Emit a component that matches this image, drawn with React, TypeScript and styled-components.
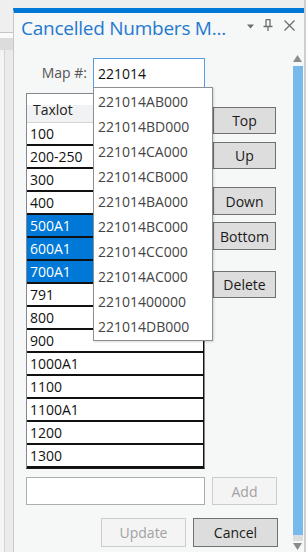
import React from 'react'
import styled, { createGlobalStyle } from 'styled-components'

const GlobalStyle = createGlobalStyle`
  html, body {
    margin: 0;
    padding: 0;
    background: #eeeeee;
  }
  body {
    width: 306px;
    height: 552px;
    overflow: hidden;
    font-family: 'Open Sans', 'Noto Sans', sans-serif;
  }
`

const taxlots = [
  '100', '200-250', '300', '400', '500A1', '600A1', '700A1', '791',
  '800', '900', '1000A1', '1100', '1100A1', '1200', '1300'
]
const selected = ['500A1', '600A1', '700A1']

const suggestions = [
  '221014AB000', '221014BD000', '221014CA000', '221014CB000', '221014BA000',
  '221014BC000', '221014CC000', '221014AC000', '22101400000', '221014DB000'
]

const Root = styled.div`
  display: flex;
  width: 306px;
  height: 552px;
`

const LeftStrip = styled.div`
  width: 13px;
  display: flex;
  flex-direction: column;
`

const StripTop = styled.div`
  height: 32px;
  background: #efefef;
  border-bottom: 1px solid #c6c6c6;
`

const StripWhite = styled.div`
  height: 5px;
  background: #fafafa;
`

const StripTab = styled.div`
  height: 12px;
  background: #dcdcdc;
`

const StripBody = styled.div`
  flex: 1;
  display: flex;
  background: #ebebeb;
`

const StripEdge = styled.div`
  width: 4px;
  background: #f4f4f4;
  border-right: 1px solid #d3d3d3;
`

const Panel = styled.div`
  flex: 1;
  margin-top: 8px;
  display: flex;
  flex-direction: column;
  background: #f6f7f7;
  border-left: 1px solid #c8c8c8;
  border-top: 5px solid #0078d7;
  padding-right: 1px;
`

const RightStrip = styled.div`
  width: 2px;
  background: #cfcfcf;
`

const TitleBar = styled.div`
  height: 37px;
  box-sizing: border-box;
  display: flex;
  align-items: flex-start;
  padding: 2px 8px 0 7px;
`

const Title = styled.div`
  flex: 1;
  font-size: 19px;
  line-height: 26px;
  color: #2479d0;
  white-space: nowrap;
  letter-spacing: -0.25px;
`

const TitleIcons = styled.div`
  display: flex;
  align-items: center;
  margin-top: 4px;
`

const IconSlot = styled.div<{ $gap: number }>`
  display: flex;
  margin-left: ${({ $gap }) => $gap}px;
`

const Body = styled.div`
  flex: 1;
  display: flex;
`

const Main = styled.div`
  flex: 1;
  padding: 8px 14px 0 12px;
  display: flex;
  flex-direction: column;
`

const MapRow = styled.div`
  display: flex;
  height: 30px;
`

const MapLabel = styled.div`
  width: 67px;
  padding-right: 6px;
  box-sizing: border-box;
  text-align: right;
  font-size: 14px;
  color: #555555;
  line-height: 30px;
`

const MapField = styled.div`
  position: relative;
`

const TextBox = styled.div<{ $focused?: boolean; $width: number }>`
  width: ${({ $width }) => $width}px;
  height: 100%;
  box-sizing: border-box;
  background: #ffffff;
  border: 1px solid ${({ $focused }) => ($focused ? '#569de5' : '#abadb3')};
  font-size: 14px;
  color: #111;
  padding-left: 4px;
  display: flex;
  align-items: center;
`

const Dropdown = styled.div`
  position: absolute;
  top: 29px;
  left: 0;
  width: 120px;
  box-sizing: border-box;
  background: #ffffff;
  border: 1px solid #8c8f94;
  box-shadow: 1px 1px 2px rgba(0, 0, 0, 0.15);
  padding: 1px 0;
  z-index: 2;
`

const DropItem = styled.div`
  height: 25px;
  line-height: 25px;
  padding-left: 4px;
  font-size: 14px;
  color: #444444;
`

const ListArea = styled.div`
  display: flex;
  margin-top: 5px;
`

const Table = styled.div`
  width: 179px;
  height: 376px;
  box-sizing: border-box;
  border: 1px solid #828790;
  border-bottom-color: #1a1a1a;
  background: #ffffff;
  overflow: hidden;
`

const Header = styled.div`
  height: 29px;
  box-sizing: border-box;
  background: linear-gradient(#ffffff 0 40%, #f1f2f3 40%);
  border-bottom: 1px solid #d5d5d5;
  padding: 6px 0 0 6px;
  font-size: 14px;
  color: #222;
`

const Row = styled.div<{ $selected: boolean }>`
  height: 23px;
  box-sizing: border-box;
  border-bottom: 2px solid #111;
  border-right: 1px solid #111;
  padding-left: 3px;
  font-size: 14px;
  line-height: 21px;
  background: ${({ $selected }) => ($selected ? '#0078d7' : '#ffffff')};
  color: ${({ $selected }) => ($selected ? '#ffffff' : '#111111')};
`

const ButtonColumn = styled.div`
  display: flex;
  flex-direction: column;
  margin-left: 8px;
  padding-top: 14px;
`

const Button = styled.div<{ $disabled?: boolean; $gap?: number; $width: number; $height?: number }>`
  width: ${({ $width }) => $width}px;
  height: ${({ $height }) => $height ?? 27}px;
  margin-top: ${({ $gap }) => $gap ?? 0}px;
  box-sizing: border-box;
  display: flex;
  align-items: center;
  justify-content: center;
  font-size: 14px;
  background: ${({ $disabled }) => ($disabled ? '#f4f4f4' : '#dddddd')};
  border: 1px solid ${({ $disabled }) => ($disabled ? '#cccccc' : '#707070')};
  color: ${({ $disabled }) => ($disabled ? '#a2a2a2' : '#1a1a1a')};
`

const AddRow = styled.div`
  display: flex;
  gap: 7px;
  height: 28px;
  margin-top: 8px;
`

const Footer = styled.div`
  display: flex;
  justify-content: flex-end;
  gap: 7px;
  margin-top: 13px;
`

const ScrollBar = styled.div`
  width: 11px;
  display: flex;
  flex-direction: column;
  align-items: center;
  padding-top: 5px;
`

const Thumb = styled.div`
  width: 10px;
  flex: 1;
  margin-top: 4px;
  background: #77b9eb;
  border-bottom: 6px solid #dcdcdc;
`

const Arrow = ({ down }: { down?: boolean }) => (
  <svg width='9' height='7' viewBox='0 0 9 7' style={{ display: 'block', marginBottom: down ? 2 : 0, marginTop: down ? 2 : 0 }}>
    <path d={down ? 'M0 0H9L4.5 7Z' : 'M4.5 0L9 7H0Z'} fill='#8b8b8b' />
  </svg>
)

const DropIcon = () => (
  <svg width='7' height='5' viewBox='0 0 7 5' style={{ marginTop: 3 }}>
    <path d='M0 0.5H7L3.5 4.5Z' fill='#6d6d6d' />
  </svg>
)

const PinIcon = () => (
  <svg width='10' height='12' viewBox='0 0 10 12'>
    <path d='M3 0.5H7V7M3 0.5V7M0.5 7.5H9.5M5 7.5V12' stroke='#6d6d6d' strokeWidth='1.3' fill='none' />
  </svg>
)

const CloseIcon = () => (
  <svg width='11' height='11' viewBox='0 0 11 11'>
    <path d='M0.5 0.5L10.5 10.5M10.5 0.5L0.5 10.5' stroke='#6d6d6d' strokeWidth='1.3' />
  </svg>
)

const App: React.FC = () => {
  return (
    <Root>
      <GlobalStyle />
      <LeftStrip>
        <StripTop />
        <StripWhite />
        <StripTab />
        <StripBody>
          <StripEdge />
        </StripBody>
      </LeftStrip>
      <Panel>
        <TitleBar>
          <Title>Cancelled Numbers M...</Title>
          <TitleIcons>
            <DropIcon />
            <IconSlot $gap={9}><PinIcon /></IconSlot>
            <IconSlot $gap={11}><CloseIcon /></IconSlot>
          </TitleIcons>
        </TitleBar>
        <Body>
          <Main>
            <MapRow>
              <MapLabel>Map #:</MapLabel>
              <MapField>
                <TextBox $focused $width={112}>221014</TextBox>
                <Dropdown>
                  {suggestions.map((s) => (
                    <DropItem key={s}>{s}</DropItem>
                  ))}
                </Dropdown>
              </MapField>
            </MapRow>
            <ListArea>
              <Table>
                <Header>Taxlot</Header>
                {taxlots.map((t) => (
                  <Row key={t} $selected={selected.includes(t)}>{t}</Row>
                ))}
              </Table>
              <ButtonColumn>
                <Button $width={63}>Top</Button>
                <Button $width={63} $gap={8}>Up</Button>
                <Button $width={63} $gap={18} $height={28}>Down</Button>
                <Button $width={63} $gap={7} $height={28}>Bottom</Button>
                <Button $width={63} $gap={21}>Delete</Button>
              </ButtonColumn>
            </ListArea>
            <AddRow>
              <TextBox $width={179} />
              <Button $width={65} $height={28} $disabled>Add</Button>
            </AddRow>
            <Footer>
              <Button $width={85} $height={29} $disabled>Update</Button>
              <Button $width={85} $height={29}>Cancel</Button>
            </Footer>
          </Main>
          <ScrollBar>
            <Arrow />
            <Thumb />
            <Arrow down />
          </ScrollBar>
        </Body>
      </Panel>
      <RightStrip />
    </Root>
  )
}

export default App
